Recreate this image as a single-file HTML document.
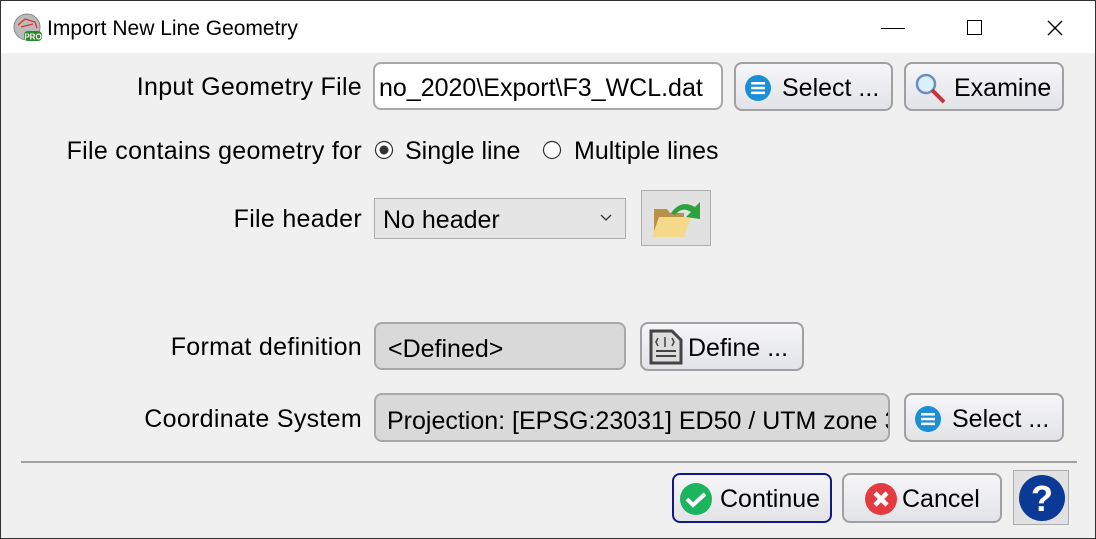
<!DOCTYPE html>
<html><head><style>
body{margin:0;width:1096px;height:539px;overflow:hidden;font-family:"Liberation Sans",sans-serif;}
.win{position:absolute;left:0;top:0;width:1094px;height:537px;border:1px solid #333;background:#f0f0f0;}
.title{position:absolute;left:0;top:0;width:1094px;height:52px;background:#fff;}
.t{position:absolute;font-size:25px;color:#000;white-space:nowrap;line-height:28px;}
.lbl{position:absolute;right:733px;font-size:25px;white-space:nowrap;line-height:28px;letter-spacing:0.3px;}
.box{position:absolute;box-sizing:border-box;}
.btn{position:absolute;box-sizing:border-box;border:2px solid #a0a0a0;border-radius:8px;background:linear-gradient(#f6f6f8,#e2e3e8);font-size:25px;line-height:48px;white-space:nowrap;}
.btn svg{position:absolute;}
</style></head><body>
<div class="win">
<div class="title">
 <svg style="position:absolute;left:12px;top:12px" width="30" height="30" viewBox="0 0 30 30"><circle cx="14" cy="14" r="13" fill="#bbb" stroke="#888"/><path d="M5 12 L12 6 L22 9 L24 15 M8 14 L20 11" stroke="#d33" fill="none" stroke-width="1.3"/><rect x="11" y="18" width="18" height="10" rx="4" fill="#2a8a2a"/><text x="20" y="26.5" font-size="8" fill="#fff" text-anchor="middle" font-weight="bold" font-family="Liberation Sans">PRO</text></svg>
 <div class="t" style="left:46px;top:14px;font-size:21px;">Import New Line Geometry</div>
 <div class="box" style="left:880px;top:27px;width:24px;height:1px;background:#000"></div>
 <div class="box" style="left:966px;top:19px;width:15px;height:15px;border:1.5px solid #000"></div>
 <svg style="position:absolute;left:1046px;top:19px" width="16" height="16"><path d="M1 1L15 15M15 1L1 15" stroke="#000" stroke-width="1.4"/></svg>
</div>

<div class="lbl" style="top:72px">Input Geometry File</div>
<div class="box" style="left:372px;top:61px;width:350px;height:48px;background:#fff;border:2px solid #a8a8a8;border-radius:8px;overflow:hidden"><div class="t" style="left:4px;top:10px">no_2020\Export\F3_WCL.dat</div></div>
<div class="btn" style="left:733px;top:61px;width:159px;height:49px"><svg style="left:8px;top:10px" width="28" height="28"><circle cx="14" cy="14" r="13" fill="#1a8fd6"/><rect x="7" y="8" width="14" height="2.5" fill="#fff"/><rect x="7" y="12.8" width="14" height="2.5" fill="#fff"/><rect x="7" y="17.6" width="14" height="2.5" fill="#fff"/></svg><span style="position:absolute;left:46px">Select ...</span></div>
<div class="btn" style="left:903px;top:61px;width:160px;height:49px"><svg style="left:8px;top:8px" width="34" height="34"><circle cx="12" cy="12" r="9" fill="#dbeefc" stroke="#6a8fb8" stroke-width="2.5"/><path d="M18 18L30 30" stroke="#c0383c" stroke-width="4"/></svg><span style="position:absolute;left:48px">Examine</span></div>

<div class="lbl" style="top:136px">File contains geometry for</div>
<svg style="position:absolute;left:373px;top:139px" width="20" height="20"><circle cx="10" cy="10" r="8.5" fill="#fff" stroke="#333" stroke-width="1.2"/><circle cx="10" cy="10" r="4.5" fill="#333"/></svg>
<div class="t" style="left:404px;top:136px">Single line</div>
<svg style="position:absolute;left:541px;top:139px" width="20" height="20"><circle cx="10" cy="10" r="8.5" fill="#fff" stroke="#333" stroke-width="1.2"/></svg>
<div class="t" style="left:573px;top:136px">Multiple lines</div>

<div class="lbl" style="top:204px">File header</div>
<div class="box" style="left:373px;top:197px;width:252px;height:41px;background:#e5e5e5;border:1px solid #adadad"><div class="t" style="left:8px;top:7px">No header</div><svg style="position:absolute;left:225px;top:15px" width="12" height="8"><path d="M1 1L6 6L11 1" stroke="#333" fill="none" stroke-width="1.3"/></svg></div>
<div class="box" style="left:640px;top:189px;width:70px;height:56px;background:#e1e1e1;border:1px solid #adadad"><svg style="position:absolute;left:9px;top:6px" width="56" height="44"><path d="M3 12L16 12L19 16L33 16L33 35L3 35Z" fill="#b8924a"/><path d="M1 40L8 20L40 20L33 40Z" fill="#f4d98a"/><path d="M20 16Q30 2 44 10L49 5L49 22L35 20L40 15Q31 9 24 18Z" fill="#2aa33a"/></svg></div>

<div class="lbl" style="top:332px">Format definition</div>
<div class="box" style="left:373px;top:321px;width:252px;height:48px;background:#d9d9d9;border:2px solid #a8a8a8;border-radius:8px"><div class="t" style="left:12px;top:11px">&lt;Defined&gt;</div></div>
<div class="btn" style="left:639px;top:321px;width:164px;height:49px"><svg style="left:6px;top:4px" width="38" height="38"><path d="M3 3L24 3L33 12L33 35L3 35Z" fill="#ddd" stroke="#444" stroke-width="3"/><path d="M10 10L8 14L10 18M17 9V19M24 10L26 14L24 18" stroke="#444" fill="none" stroke-width="1.5"/><rect x="8" y="22" width="20" height="2" fill="#444"/><rect x="8" y="27" width="20" height="2" fill="#444"/></svg><span style="position:absolute;left:46px">Define ...</span></div>

<div class="lbl" style="top:404px">Coordinate System</div>
<div class="box" style="left:373px;top:392px;width:516px;height:49px;background:#d9d9d9;border:2px solid #a8a8a8;border-radius:8px;overflow:hidden"><div class="t" style="left:11px;top:12px">Projection: [EPSG:23031] ED50 / UTM zone 31N</div></div>
<div class="btn" style="left:903px;top:392px;width:160px;height:49px"><svg style="left:8px;top:10px" width="28" height="28"><circle cx="14" cy="14" r="13" fill="#1a8fd6"/><rect x="7" y="8" width="14" height="2.5" fill="#fff"/><rect x="7" y="12.8" width="14" height="2.5" fill="#fff"/><rect x="7" y="17.6" width="14" height="2.5" fill="#fff"/></svg><span style="position:absolute;left:46px">Select ...</span></div>

<div class="box" style="left:20px;top:460px;width:1056px;height:2px;background:#a0a0a0"></div>

<div class="btn" style="left:671px;top:472px;width:160px;height:50px;border-color:#101a80"><svg style="left:5px;top:7px" width="34" height="34"><circle cx="17" cy="17" r="16" fill="#1bb560"/><path d="M8 17L14 23L26 12" stroke="#fff" stroke-width="4" fill="none"/></svg><span style="position:absolute;left:46px">Continue</span></div>
<div class="btn" style="left:841px;top:472px;width:160px;height:50px"><svg style="left:20px;top:7px" width="34" height="34"><circle cx="17" cy="17" r="16" fill="#e33b3f"/><path d="M11 11L23 23M23 11L11 23" stroke="#fff" stroke-width="4.5"/></svg><span style="position:absolute;left:58px">Cancel</span></div>
<div class="box" style="left:1012px;top:469px;width:56px;height:55px;background:#e1e1e1;border:1px solid #adadad"><svg style="position:absolute;left:4px;top:3px" width="48" height="48"><circle cx="24" cy="24" r="23" fill="#0a3a96"/><text x="24" y="37" font-size="36" font-weight="bold" fill="#fff" text-anchor="middle" font-family="Liberation Sans">?</text></svg></div>
</div>
</body></html>
